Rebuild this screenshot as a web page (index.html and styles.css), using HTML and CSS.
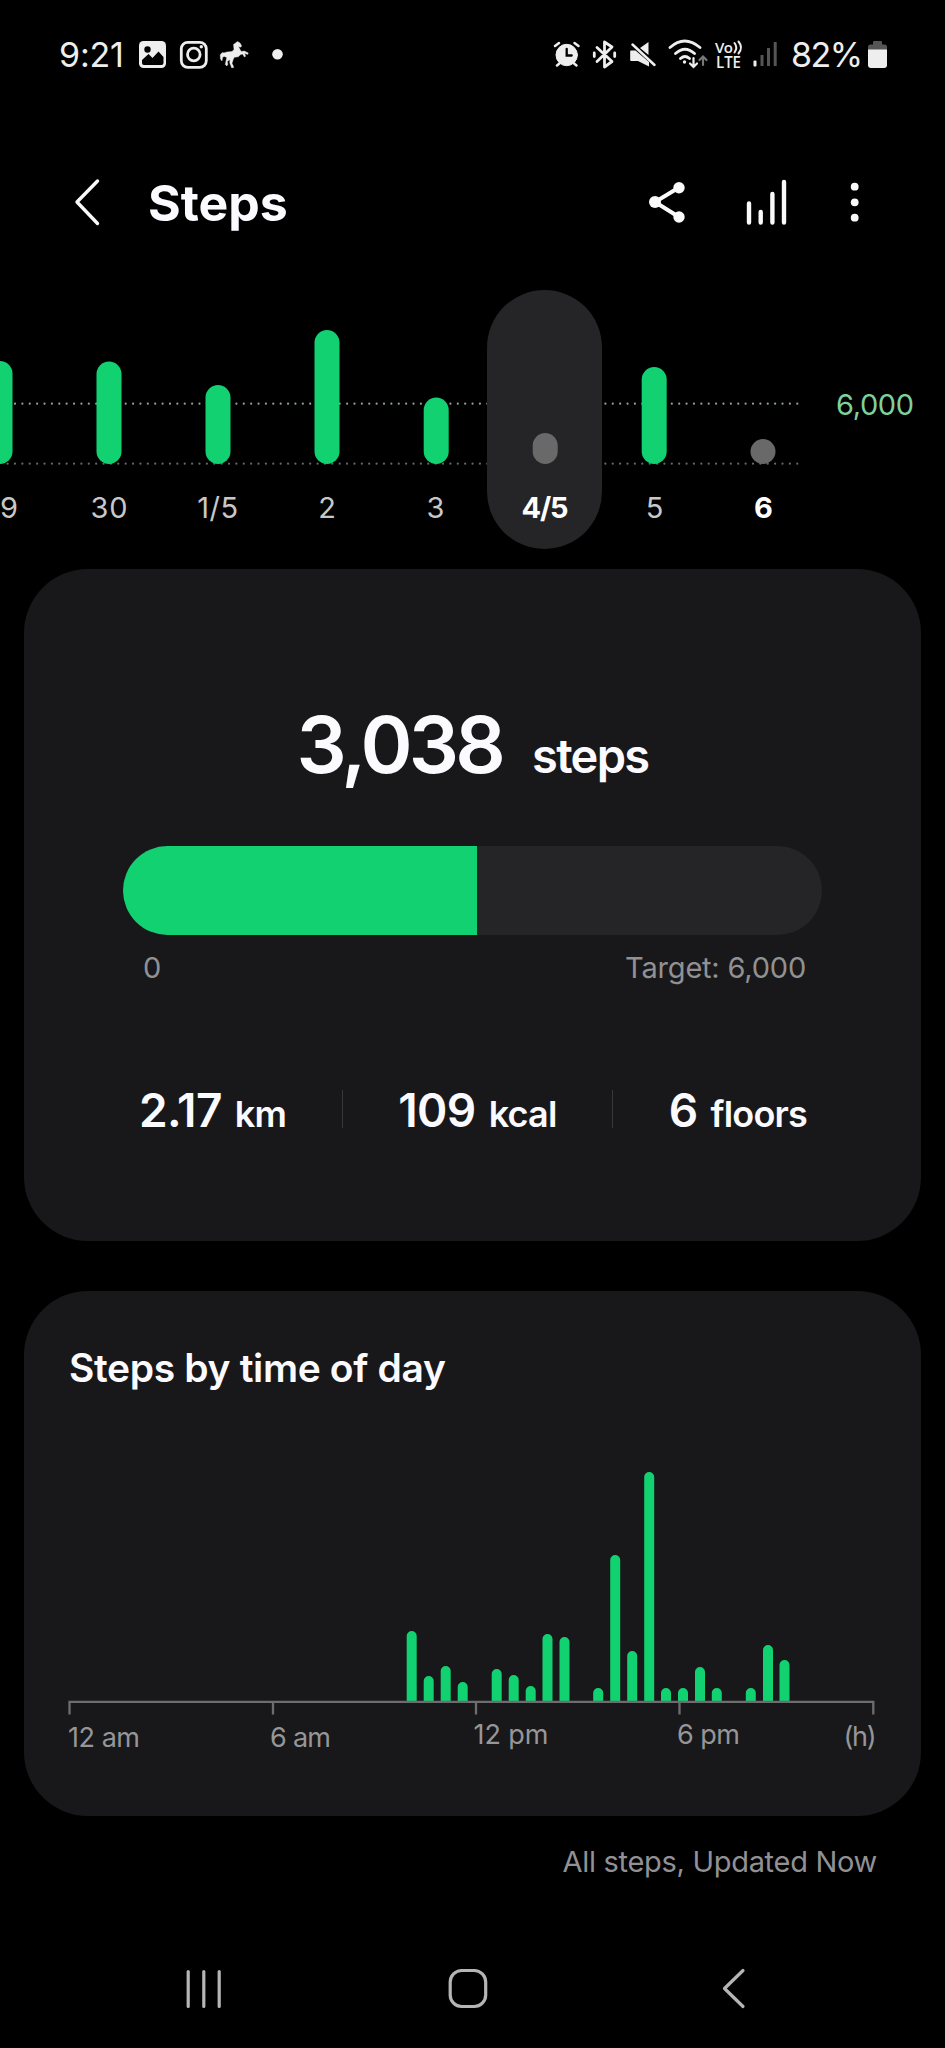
FILE: index.html
```html
<!DOCTYPE html>
<html lang="en">
<head>
<meta charset="utf-8">
<title>Steps</title>
<link rel="stylesheet" href="styles.css">
</head>
<body>
<div class="status">
  <span class="clock">9:21</span>
  <svg class="notif" viewBox="136 36 152 36" width="152" height="36">
    <rect x="139" y="41" width="27" height="27" rx="4.5" fill="#eee"/>
    <circle cx="147.500" cy="49.500" r="3.200" fill="#000"/>
    <path d="M142 63v-3l6.500-6 4 4 6-6.500 5 5.500v6q0 2-2 2h-17.500q-2 0-2-2z" fill="#000"/>
    <rect x="181.300" y="42.300" width="25" height="25" rx="6.500" fill="none" stroke="#eee" stroke-width="2.800"/>
    <circle cx="193.800" cy="54.500" r="6.300" fill="none" stroke="#eee" stroke-width="2.800"/>
    <circle cx="201.300" cy="46.800" r="1.700" fill="#eee"/>
    <path d="M233.500 44.500L237.500 41.500l2.500 1.500 1.700 3-1.200 1.200-2-.700 1.500 3 1.300 2 3-.500 4 2-.700 1.500-3-1.200 1 3-1.200.700-1.800-3-2.300.800-2 2-4 .500-1 2-1.300 4 1.800 4-2 .700-2-5v-3.500l-2.500 2 .500 3-1 1.500-1.500-1.500.800-4 .700-3-2.300-1-1.800.500-.700 4-1.500-2-.300-4 1.800-2.300h2.500l2.500-.700 5-.500 2-2z" fill="#eee" stroke="#eee" stroke-width=".4"/>
    <circle cx="277.500" cy="54.300" r="5.300" fill="#eee"/>
  </svg>
  <svg class="system" viewBox="550 36 232 36" width="232" height="36">
    <g fill="#eee" stroke="#eee" stroke-linecap="round">
      <circle cx="566.700" cy="55" r="10.700"/>
      <path d="M555 46l4-3M578.500 46l-4-3M560 63l-3 2.500M573.500 63l3 2.500" stroke-width="2.500" fill="none"/>
      <path d="M566.700 49v6.500h5" stroke="#000" stroke-width="2.300" fill="none"/>
      <path d="M597 47.500l15 14-7.500 5.500V42l7.500 5-15 14.500M594.300 53v3.500M614.700 53v3.500" stroke-width="2.800" stroke-linejoin="round" fill="none"/>
      <path d="M640 48l8.500-6v13zM631 50.500h4.500L649 62v4.500L638 61h-7q-.800 0-.800-1v-8.500q0-1 .8-1z" stroke="none"/>
      <path d="M632.500 44.500L654.500 65" stroke-width="2.500"/>
      <path d="M670 47.500q14.500-13 30 0M675.500 53.500q9.500-8.500 19 0M680.500 58.500q4.500-4 9 0" stroke-width="2.800" fill="none"/>
      <circle cx="684.500" cy="62" r="1.700" stroke="none"/>
      <path d="M693.500 58v9m-3.500-3.500l3.500 3.500 3.500-3.500" stroke-width="2.200" fill="none"/>
      <path d="M703 65v-8m-3.500 3l3.500-3.500 3.500 3.500" stroke="#777" stroke-width="2.200" fill="none"/>
      <path d="M734.500 43q3.500 4.500 0 9.500M738.500 41.500q5 6 0 12" stroke-width="2" fill="none"/>
    </g>
    <text class="lte" x="715" y="52.500" textLength="18">Vo</text>
    <text class="lte tall" x="716" y="67.500" textLength="25" lengthAdjust="spacingAndGlyphs">LTE</text>
    <rect x="753.500" y="60.500" width="3" height="6" rx="1" fill="#eee"/>
    <path d="M762 55v11M768.500 48v18M775.200 42v24" stroke="#555" stroke-width="3"/>
  </svg>
  <span class="percent">82%</span>
  <svg class="battery" viewBox="867 40 22 29" width="22" height="29">
    <path d="M868 50v-3q0-2.500 2.500-2.500H873V42q0-1 1-1h7q1 0 1 1v2.500h2.500q2.500 0 2.500 2.500v3z" fill="#555"/>
    <path d="M868 49.500h19V65q0 3-3 3h-13q-3 0-3-3z" fill="#eee"/>
  </svg>
</div>

<header class="bar">
  <svg viewBox="70 174 32 56" width="32" height="56"><path d="M97.500 181L77 202l20.500 21.500" fill="none" stroke="#fafafa" stroke-width="3.400" stroke-linecap="round" stroke-linejoin="round"/></svg>
  <h1>Steps</h1>
  <svg class="actions" viewBox="640 174 230 56" width="230" height="56">
    <path d="M679 187.500L655 202l24 15" fill="none" stroke="#fafafa" stroke-width="4"/>
    <g fill="#fafafa"><circle cx="655" cy="202" r="6"/><circle cx="679" cy="187.700" r="5.700"/><circle cx="679" cy="217" r="5.700"/>
    <circle cx="854.700" cy="186.700" r="3.900"/><circle cx="854.700" cy="202.300" r="3.900"/><circle cx="854.700" cy="217.700" r="3.900"/></g>
    <path d="M749 203.500v19M760.700 212v10.500M772.400 194v28.500M784 182v40.500" stroke="#fafafa" stroke-width="4.400" stroke-linecap="round"/>
  </svg>
</header>

<svg class="week" viewBox="0 280 945 289" width="945" height="289">
  <path d="M15 403.700H799" stroke="#91a591" stroke-width="2.200" stroke-dasharray="0 7.380" stroke-linecap="round"/>
  <path d="M7.600 463.700H799" stroke="#686868" stroke-width="2.200" stroke-dasharray="0 7.380" stroke-linecap="round"/>
  <rect x="487" y="290" width="115" height="259" rx="57.500" fill="#252527"/>
  <g fill="#12d170">
    <rect x="-12.500" y="361" width="25" height="103" rx="12.500"/>
    <rect x="96.500" y="361.500" width="25" height="102.500" rx="12.500"/>
    <rect x="205.500" y="385" width="25" height="79" rx="12.500"/>
    <rect x="314.500" y="330" width="25" height="134" rx="12.500"/>
    <rect x="423.700" y="397.500" width="25" height="66.500" rx="12.500"/>
    <rect x="641.700" y="367" width="25" height="97" rx="12.500"/>
  </g>
  <rect x="532.700" y="433" width="25" height="31" rx="12.500" fill="#696969"/>
  <circle cx="763" cy="451.500" r="12.500" fill="#696969"/>
  <g class="days">
    <text x="9" y="517.500">9</text><text x="109" y="517.500" textLength="37">30</text><text x="217.700" y="517.500" textLength="41">1/5</text>
    <text x="327" y="517.500">2</text><text x="435.500" y="517.500">3</text><text class="strong" x="545" y="517.500" textLength="47">4/5</text>
    <text x="654.500" y="517.500">5</text><text class="strong" x="763.500" y="517.500">6</text>
  </g>
  <text class="goal" x="836" y="415" textLength="78">6,000</text>
</svg>

<main>
  <section class="card summary">
    <div class="total"><span class="count">3,038</span><span class="unit">steps</span></div>
    <div class="track"><div class="fill" style="width:50.63%"></div></div>
    <div class="range"><span>0</span><span class="target">Target: 6,000</span></div>
    <div class="stats">
      <div class="stat"><b>2.17</b><span>km</span></div>
      <i class="rule"></i>
      <div class="stat"><b>109</b><span>kcal</span></div>
      <i class="rule"></i>
      <div class="stat"><b>6</b><span>floors</span></div>
    </div>
  </section>

  <section class="card daily">
    <h2>Steps by time of day</h2>
    <svg class="hours" viewBox="60 1460 830 300" width="830" height="300">
      <g stroke="#12d170" stroke-width="10">
        <path class="bars" d="M411.700 1702v-66M428.700 1702v-21M445.700 1702v-31M462.700 1702v-15M496.700 1702v-28M513.700 1702v-22M530.700 1702v-11M547.500 1702v-63M564.500 1702v-60M598.200 1702v-9M615.200 1702v-142M632.200 1702v-46M649.200 1702v-225M666 1702v-9M683 1702v-9M700 1702v-30M716.800 1702v-9M750.800 1702v-9M768 1702v-52M784.500 1702v-37"/>
      </g>
      <rect x="400" y="1701.500" width="400" height="8" fill="#18181a"/>
      <path d="M69.500 1714.500V1701.800H873.300V1714.500M273 1702v12.500M476 1702v12.500M679.500 1702v12.500" fill="none" stroke="#6d6d6f" stroke-width="2.300"/>
      <g class="ticks">
        <text x="68" y="1747" textLength="72">12 am</text><text x="270" y="1747" textLength="61">6 am</text>
        <text x="473.500" y="1744" textLength="75">12 pm</text><text x="677" y="1744" textLength="63">6 pm</text>
        <text x="843.500" y="1746" textLength="33">(h)</text>
      </g>
    </svg>
  </section>
  <p class="updated">All steps, Updated Now</p>
</main>

<nav>
  <svg viewBox="184 1966 40 46" width="40" height="46"><path d="M188.200 1971.500v35M203.800 1971.500v35M219.200 1971.500v35" stroke="#b5b5b5" stroke-width="3.200" stroke-linecap="round"/></svg>
  <svg viewBox="446 1966 44 46" width="44" height="46"><rect x="450.200" y="1970.500" width="35.500" height="36" rx="11.500" fill="none" stroke="#b5b5b5" stroke-width="3.200"/></svg>
  <svg viewBox="718 1966 30 46" width="30" height="46"><path d="M743 1970.500l-18.500 18L743 2006.500" fill="none" stroke="#b5b5b5" stroke-width="3.200" stroke-linecap="round" stroke-linejoin="round"/></svg>
</nav>
</body>
</html>
```
FILE: styles.css
```css
* { box-sizing: border-box; }
body {
  margin: 0;
  width: 945px;
  height: 2048px;
  overflow: hidden;
  background: #000;
  color: #fafaff;
  font-family: Inter, "Open Sans", sans-serif;
  display: flex;
  flex-direction: column;
}
svg { display: block; flex: none; }
span, b { white-space: nowrap; }

.status { height: 108px; display: flex; align-items: center; padding: 0 56px 0 59px; color: #eee; }
.clock { width: 77px; font-size: 34px; letter-spacing: -.2px; }
.system { margin-left: 262px; }
.percent { width: 77px; margin-left: 9px; font-size: 34px; letter-spacing: -1.5px; }
.battery { margin-left: -1px; }
.lte { font: 600 15px "Open Sans", sans-serif; fill: #eee; }
.lte.tall { font-size: 16px; }

.bar { height: 172px; padding: 66px 75px 0 70px; display: flex; align-items: flex-start; }
.bar h1 { margin: -1px 0 0 46px; font-size: 50px; line-height: 60px; font-weight: 700; letter-spacing: 0; }
.actions { margin-left: auto; }

.days { font-size: 29px; fill: #c8c8c8; text-anchor: middle; }
.days .strong { font-weight: 700; fill: #fff; }
.goal { font-size: 29px; fill: #7fd09a; }

main { padding: 0 24px; }
.card { background: #18181a; border-radius: 64px; }
.summary { height: 672px; padding: 125px 99px 0; }
.total { display: flex; justify-content: center; align-items: baseline; gap: 30px; height: 152px; line-height: 100px; font-weight: 600; }
.count { font-size: 79px; letter-spacing: -3.8px; }
.unit { font-size: 47px; letter-spacing: -1.7px; }
.track { height: 89px; border-radius: 45px; background: #252527; overflow: hidden; }
.fill { height: 100%; background: #12d170; }
.range { display: flex; justify-content: space-between; padding: 15px 16px 0 20px; font-size: 29px; line-height: 36px; color: #919194; }
.target { letter-spacing: -.2px; }
.stats { display: flex; justify-content: space-between; align-items: center; margin-top: 83px; padding: 0 15px 0 16px; height: 80px; }
.stat { display: flex; align-items: baseline; gap: 13px; padding-top: 2px; }
.stat b { font-size: 46px; font-weight: 600; letter-spacing: -.6px; }
.stat span { font-size: 36px; font-weight: 600; letter-spacing: -.8px; }
.rule { width: 1px; height: 38px; background: #38383b; }

.daily { margin-top: 50px; height: 525px; padding: 52px 36px 0; }
.daily h2 { margin: 0 0 0 9px; font-size: 39px; line-height: 50px; height: 117px; font-weight: 600; letter-spacing: -.35px; }
.bars { stroke-linecap: round; }
.ticks { font-size: 27px; fill: #969699; }
.updated { margin: 26px 44px 0; text-align: right; font-size: 29px; line-height: 40px; letter-spacing: -.3px; color: #919193; }

nav { margin-top: 84px; display: flex; padding-left: 184px; }
nav svg:nth-child(2) { margin-left: 222px; }
nav svg:nth-child(3) { margin-left: 228px; }
```
